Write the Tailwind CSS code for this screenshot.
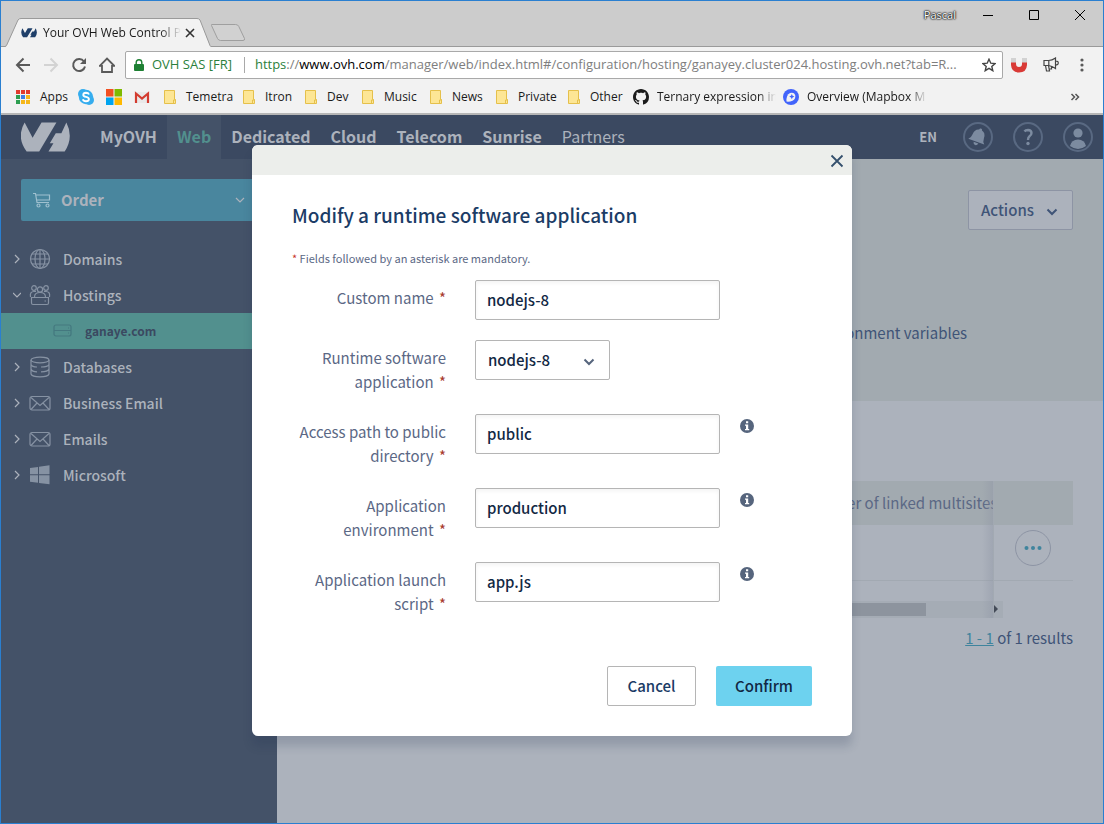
<!DOCTYPE html>
<html lang="en">
<head>
    <meta charset="UTF-8">
    <meta name="viewport" content="width=device-width, initial-scale=1.0">
    <title>Your OVH Web Control Panel</title>
    <script src="https://cdn.jsdelivr.net/npm/@tailwindcss/browser@4"></script>
</head>
<body class="min-h-screen flex flex-col border border-[#2a7fd0] bg-[#acb2bc] font-['Noto_Sans_CJK_SC','Noto_Sans',sans-serif] text-[15px] overflow-x-hidden">

    <!-- Browser window -->
    <div class="font-['Open_Sans','Noto_Sans',sans-serif] text-xs text-[#1a1a1a] bg-[#f2f2f2] border-b-2 border-[#b6b6b6]">
        <!-- Title bar -->
        <div class="h-[46px] flex items-end justify-between bg-[#cccccc] border-b border-[#9a9a9a]">
            <div class="flex items-end pl-1">
                <div class="relative w-[206px] h-[29px] -mb-px flex items-center pl-4 pr-4">
                    <svg class="absolute inset-0 w-full h-full" viewBox="0 0 206 29" fill="none">
                        <path d="M0 29 L1.500 28 L13 2 Q14 .5 16 .5 H192 Q194 .5 195 2 L205 28 L206 29 Z" fill="#f2f2f2"/>
                        <path d="M0 28.500 L1.500 27.500 L13 2 Q14 .5 16 .5 H192 Q194 .5 195 2 L205 27.500 L206 28.500" stroke="#9a9a9a"/>
                    </svg>
                    <svg class="relative w-4 h-4 shrink-0" viewBox="60 7 153 153" fill="#1f3f69">
                        <path d="M74 38 L98 84 L125 38 H170 L118 125 H80 Q48 82 74 38Z"/>
                        <path d="M200 38 Q226 82 195 125 H146 L161 100 H150 L168 70 H185Z"/>
                    </svg>
                    <span class="relative ml-1.5 flex-1 overflow-hidden whitespace-nowrap mask-r-from-85%">Your OVH Web Control Pa</span>
                    <button class="relative ml-1" aria-label="Close tab">
                        <svg class="w-2.5 h-2.5" viewBox="0 0 10 10" stroke="#333" stroke-width="1.600"><path d="M1 1 L9 9 M9 1 L1 9"/></svg>
                    </button>
                </div>
                <button class="mb-1" aria-label="New tab">
                    <svg class="w-9 h-[18px]" viewBox="0 0 36 18"><path d="M0 1 H24 Q26.500 1 27.300 3 L33 15 Q33.500 17 31.500 17 H9 Q7 17 6 15 L0 2 Q-.5 1 0 1Z" transform="translate(.5 -.5)" fill="#d1d1d1" stroke="#9f9f9f"/></svg>
                </button>
            </div>
            <div class="self-start flex items-center h-7">
                <span class="text-[11px] text-white text-shadow-[0_0_1px_#000,0_0_2px_#000,0_0_2px_#000]">Pascal</span>
                <button class="ml-6 w-4 flex justify-center" aria-label="Minimize"><svg class="w-3 h-3" viewBox="0 0 12 12" stroke="#000"><path d="M1 6.500 H11"/></svg></button>
                <button class="ml-7 w-5 flex justify-center" aria-label="Maximize"><svg class="w-3 h-3" viewBox="0 0 12 12" fill="none" stroke="#000"><path d="M1.500 1.500 H10.500 V10.500 H1.500Z"/></svg></button>
                <button class="ml-6.5 mr-[13px] w-5 flex justify-center" aria-label="Close"><svg class="w-3 h-3" viewBox="0 0 12 12" stroke="#000"><path d="M1 1 L11 11 M11 1 L1 11"/></svg></button>
            </div>
        </div>

        <!-- Toolbar -->
        <div class="h-9 flex items-center pl-3.5 pr-3.5">
            <button class="mr-3" aria-label="Back"><svg class="w-4 h-4" viewBox="0 0 16 16" fill="none" stroke="#5a5a5a" stroke-width="2"><path d="M15 8 H2 M8.500 1.500 L2 8 L8.500 14.500"/></svg></button>
            <button class="mr-3" aria-label="Forward"><svg class="w-4 h-4" viewBox="0 0 16 16" fill="none" stroke="#d3d3d3" stroke-width="2"><path d="M1 8 H14 M7.500 1.500 L14 8 L7.500 14.500"/></svg></button>
            <button class="mr-3" aria-label="Reload"><svg class="w-4 h-4" viewBox="0 0 16 16" fill="none" stroke="#5a5a5a" stroke-width="2"><path d="M13 4.500 A6 6 0 1 0 14 9.500"/><path d="M15 1 V7 H9Z" fill="#5a5a5a" stroke="none"/></svg></button>
            <button class="mr-2.5" aria-label="Home"><svg class="w-4 h-4" viewBox="0 0 16 16" fill="none" stroke="#5a5a5a" stroke-width="1.800"><path d="M.8 8.800 L8 1.500 L15.200 8.800 H13 V15 H3 V8.800Z"/></svg></button>
            <div class="flex-1 min-w-0 h-7 flex items-center bg-white border border-[#a9a9a9] rounded-xs pl-2 pr-1.5 text-[13px]">
                <svg class="w-2.5 h-3 shrink-0" viewBox="0 0 10 12" fill="#1e8033"><path d="M1 5 H9 Q10 5 10 6 V11 Q10 12 9 12 H1 Q0 12 0 11 V6 Q0 5 1 5Z"/><path d="M2.200 5.500 V3.500 A2.800 2.800 0 0 1 7.800 3.500 V5.500" fill="none" stroke="#1e8033" stroke-width="1.400"/></svg>
                <span class="ml-2 whitespace-nowrap text-[#2b7f3c]">OVH SAS [FR]</span>
                <span class="ml-3 mr-2.5 w-px h-4 shrink-0 bg-[#a9a9a9]"></span>
                <div role="textbox" aria-label="Address" class="flex-1 min-w-0 whitespace-nowrap overflow-hidden text-[#7e7e7e]"><span class="text-[#2b7f3c]">https</span>://<span class="text-black">www.ovh.com</span>/manager/web/index.html#/configuration/hosting/ganayey.cluster024.hosting.ovh.net?tab=R...</div>
                <svg class="w-3.5 h-3.5 shrink-0" viewBox="0 0 14 14" fill="none" stroke="#444" stroke-width="1.400"><path d="M7 1.200 L8.800 5.200 L13 5.600 L9.800 8.400 L10.800 12.700 L7 10.400 L3.200 12.700 L4.200 8.400 L1 5.600 L5.200 5.200Z"/></svg>
            </div>
            <button class="ml-2" aria-label="Magnet"><svg class="w-4 h-4" viewBox="0 0 16 16"><path d="M0 1 H5 V6 H0Z M11 1 H16 V6 H11Z" fill="#d2d2d2"/><path d="M0 5.500 H5 V7 Q5 10 8 10 Q11 10 11 7 V5.500 H16 V8 Q15.500 15.500 8 15.500 Q.5 15.500 0 8Z" fill="#d93a36"/></svg></button>
            <button class="ml-4" aria-label="Announcements"><svg class="w-4 h-4" viewBox="0 0 16 16" fill="none" stroke="#444" stroke-width="1.200"><path d="M1 3.500 H5.500 Q9 3.500 12.500 1 V11.500 Q9 9 5.500 8.500 H1Z M5.800 3.500 V8.500 M2.500 8.500 L3.500 14 H6.500 L5.500 8.500 M8.500 9.500 V12 H6.300 M12.500 4 Q15.500 4 15.200 6 Q15.300 8 12.500 8"/></svg></button>
            <button class="ml-[15px] -mr-px" aria-label="Menu"><svg class="w-4 h-4" viewBox="0 0 16 16" fill="#5a5a5a"><circle cx="8" cy="3" r="1.600"/><circle cx="8" cy="8" r="1.600"/><circle cx="8" cy="13" r="1.600"/></svg></button>
        </div>

        <!-- Bookmarks -->
        <svg class="hidden">
            <symbol id="folder" viewBox="0 0 12 14"><path d="M.5 .5 H10.500 V9.500 H11.500 V13.500 H.5Z" fill="#fde695" stroke="#e5c04b"/><path d="M9.500 13 V10 H11.500" fill="none" stroke="#e5c04b"/></symbol>
        </svg>
        <nav class="h-[30px] flex items-center pl-[15px] pr-5 pb-0.5 whitespace-nowrap">
            <a href="#" class="w-[62px] shrink-0 flex items-center gap-2.5">
                <svg class="w-3.5 h-3.5" viewBox="0 0 14 14"><path d="M0 0h4v4H0z M5 0h4v4H5z M10 0h4v4h-4z" fill="#e33b2e"/><path d="M0 5h4v4H0z" fill="#2d9e50"/><path d="M5 5h4v4H5z" fill="#3f7ee8"/><path d="M10 5h4v4h-4z M5 10h4v4H5z M10 10h4v4h-4z" fill="#f5b71b"/><path d="M0 10h4v4H0z" fill="#2d9e50"/></svg>
                Apps
            </a>
            <a href="#" class="w-7 shrink-0" aria-label="Skype"><svg class="w-4 h-4" viewBox="0 0 16 16"><circle cx="5" cy="5" r="5" fill="#36adee"/><circle cx="11" cy="11" r="5" fill="#36adee"/><circle cx="8" cy="8" r="7.200" fill="#36adee"/><path d="M11 5.500 Q10.300 3.800 8 3.800 Q5.300 3.900 5.300 5.900 Q5.300 7.300 8 7.900 Q10.900 8.500 10.900 10.200 Q10.800 12.200 8 12.200 Q5.400 12.200 4.900 10.200" fill="none" stroke="#fff" stroke-width="1.900"/></svg></a>
            <a href="#" class="w-7 shrink-0" aria-label="Microsoft"><svg class="w-4 h-4" viewBox="0 0 16 16"><path d="M0 0h7.500v7.500H0z" fill="#f25022"/><path d="M8.500 0H16v7.500H8.500z" fill="#7fba00"/><path d="M0 8.500h7.500V16H0z" fill="#00a4ef"/><path d="M8.500 8.500H16V16H8.500z" fill="#ffb900"/></svg></a>
            <a href="#" class="w-[30px] shrink-0" aria-label="Gmail"><svg class="w-4 h-4" viewBox="0 0 16 16"><path d="M2 3h12v11H2z" fill="#e9e9e9"/><path d="M2 14 V4.500 L8 9.500 L14 4.500 V14" fill="none" stroke="#d33c30" stroke-width="2.200"/></svg></a>
            <a href="#" class="w-[79px] shrink-0 flex items-center gap-2.5"><svg class="w-3 h-3.5 shrink-0"><use href="#folder"/></svg>Temetra</a>
            <a href="#" class="w-[62px] shrink-0 flex items-center gap-2.5"><svg class="w-3 h-3.5 shrink-0"><use href="#folder"/></svg>Itron</a>
            <a href="#" class="w-[57px] shrink-0 flex items-center gap-2.5"><svg class="w-3 h-3.5 shrink-0"><use href="#folder"/></svg>Dev</a>
            <a href="#" class="w-[68px] shrink-0 flex items-center gap-2.5"><svg class="w-3 h-3.5 shrink-0"><use href="#folder"/></svg>Music</a>
            <a href="#" class="w-[66px] shrink-0 flex items-center gap-2.5"><svg class="w-3 h-3.5 shrink-0"><use href="#folder"/></svg>News</a>
            <a href="#" class="w-[72px] shrink-0 flex items-center gap-2.5"><svg class="w-3 h-3.5 shrink-0"><use href="#folder"/></svg>Private</a>
            <a href="#" class="w-[65px] shrink-0 flex items-center gap-2.5"><svg class="w-3 h-3.5 shrink-0"><use href="#folder"/></svg>Other</a>
            <a href="#" class="w-[150px] shrink-0 flex items-center gap-2">
                <svg class="w-4 h-4 shrink-0" viewBox="0 0 16 16" fill="#1b1b1b"><path d="M8 0C3.580 0 0 3.580 0 8c0 3.540 2.290 6.530 5.470 7.590.4.070.55-.17.55-.38 0-.19-.01-.82-.01-1.490-2.010.37-2.530-.49-2.690-.94-.09-.23-.48-.94-.82-1.130-.28-.15-.68-.52-.01-.53.63-.01 1.080.58 1.230.82.72 1.210 1.870.87 2.330.66.07-.52.28-.87.51-1.070-1.780-.2-3.640-.89-3.640-3.950 0-.87.31-1.590.82-2.150-.08-.2-.36-1.020.08-2.120 0 0 .67-.21 2.200.82.64-.18 1.320-.27 2-.27s1.360.09 2 .27c1.530-1.040 2.200-.82 2.200-.82.44 1.100.16 1.920.08 2.120.51.56.82 1.270.82 2.150 0 3.070-1.870 3.750-3.650 3.950.29.25.54.73.54 1.480 0 1.070-.01 1.930-.01 2.200 0 .21.15.46.55.38A8.010 8.010 0 0 0 16 8c0-4.420-3.580-8-8-8z"/></svg>
                <span class="w-[119px] overflow-hidden mask-r-from-85%">Ternary expression in</span>
            </a>
            <a href="#" class="shrink-0 flex items-center gap-2">
                <svg class="w-4 h-4 shrink-0" viewBox="0 0 16 16"><circle cx="8" cy="8" r="8" fill="#4264fb"/><path d="M3.500 12.600 Q3 6 7 4 Q11 2.800 12.200 6 Q13 10 9.500 11.800 Q6.500 13 3.500 12.600Z" fill="#f2f2f2"/><path d="M8.800 5 L9.600 6.800 L11.400 7.600 L9.600 8.400 L8.800 10.200 L8 8.400 L6.200 7.600 L8 6.800Z" fill="#4264fb"/></svg>
                <span class="w-[120px] overflow-hidden mask-r-from-85%">Overview (Mapbox M</span>
            </a>
            <button class="ml-auto" aria-label="More bookmarks"><svg class="w-4 h-4" viewBox="0 0 16 16" fill="none" stroke="#555" stroke-width="1.500"><path d="M4.500 5 L7.500 8 L4.500 11 M8.500 5 L11.500 8 L8.500 11"/></svg></button>
        </nav>
    </div>

    <!-- Page -->
    <div class="relative flex-1 flex flex-col">
        <header class="h-11 flex items-center bg-[#3b4961] text-[#acb2bc] pl-5 pr-2.5 text-base">
            <a href="#" aria-label="OVH" class="mr-5">
                <svg class="w-[49px] h-[30px]" viewBox="63 37 148 89" fill="#acb2bc">
                    <path d="M74 38 L98 84 L125 38 H170 L118 125 H80 Q48 82 74 38Z"/>
                    <path d="M200 38 Q223 82 195 125 H146 L161 100 H150 L168 70 H185Z"/>
                </svg>
            </a>
            <nav class="self-stretch flex items-stretch font-bold">
                <a href="#" class="flex items-center px-2.5 pb-0.5">MyOVH</a>
                <a href="#" class="flex items-center px-2.5 pb-0.5 bg-[#445268] text-[#52908e]">Web</a>
                <a href="#" class="flex items-center px-2.5 pb-0.5">Dedicated</a>
                <a href="#" class="flex items-center px-2.5 pb-0.5">Cloud</a>
                <a href="#" class="flex items-center px-2.5 pb-0.5">Telecom</a>
                <a href="#" class="flex items-center px-2.5 pb-0.5">Sunrise</a>
                <a href="#" class="flex items-center px-2.5 pb-0.5 font-normal">Partners</a>
            </nav>
            <div class="ml-auto flex items-center gap-5">
                <button class="mr-1.5 text-[13px] font-bold">EN</button>
                <button aria-label="Notifications"><svg class="w-[30px] h-[30px]" viewBox="0 0 30 30"><circle cx="15" cy="15" r="14" fill="none" stroke="#596982" stroke-width="2"/><g fill="#7c8ba0" transform="rotate(20 15 15)"><path d="M15 6 Q16.500 6 16.500 7.500 Q20.800 8.500 21 14 Q21 18 23.500 20 H6.500 Q9 18 9 14 Q9.200 8.500 13.500 7.500 Q13.500 6 15 6Z"/><path d="M12.500 21 H17.500 Q17 23.500 15 23.500 Q13 23.500 12.500 21Z"/></g></svg></button>
                <button aria-label="Help"><svg class="w-[30px] h-[30px]" viewBox="0 0 30 30"><circle cx="15" cy="15" r="14" fill="none" stroke="#596982" stroke-width="2"/><path d="M11.500 9.500 Q12.500 8 15 8 Q18.500 8.200 18.500 11 Q18.500 13 16.500 14.300 Q15 15.400 15 18" fill="none" stroke="#7c8ba0" stroke-width="2.400"/><circle cx="15" cy="21.500" r="1.700" fill="#7c8ba0"/></svg></button>
                <button aria-label="Account"><svg class="w-[30px] h-[30px]" viewBox="0 0 30 30"><circle cx="15" cy="15" r="14" fill="none" stroke="#596982" stroke-width="2"/><circle cx="15" cy="11" r="4.600" fill="#7c8ba0"/><path d="M7 24 Q8.500 17.500 15 17.500 Q21.500 17.500 23 24 Q19 27 15 27 Q11 27 7 24Z" fill="#7c8ba0"/></svg></button>
            </div>
        </header>

        <div class="flex-1 flex">
            <!-- Sidebar -->
            <aside class="w-[276px] shrink-0 bg-[#445268] text-[#acb2bc] text-sm font-medium pt-5">
                <button class="ml-5 mb-5 w-[236px] h-[42px] flex items-center rounded-xs bg-[#49869e] pl-3 pr-3 text-[15px] font-bold">
                    <svg class="w-[18px] h-4" viewBox="0 0 18 16" fill="none" stroke="#9fc0cf" stroke-width="1.200"><path d="M0 1.500 H2.500 L4 10.500 H16 M3 3 H16.500 V8 H3.700"/><circle cx="5.500" cy="13.500" r="1.500"/><circle cx="14.500" cy="13.500" r="1.500"/></svg>
                    <span class="ml-2.5">Order</span>
                    <svg class="ml-auto w-2.5 h-1.5" viewBox="0 0 10 6" fill="none" stroke="#acb2bc" stroke-width="1.200"><path d="M1 1 L5 5 L9 1"/></svg>
                </button>
                <a href="#" class="h-9 flex items-center pl-3">
                    <svg class="w-2 h-2.5" viewBox="0 0 8 10" fill="none" stroke="#acb2bc" stroke-width="1.200"><path d="M2 1 L6 5 L2 9"/></svg>
                    <svg class="ml-2 w-[22px] h-[22px]" viewBox="0 0 22 22" fill="none" stroke="#8692a3" stroke-width="1.200"><circle cx="11" cy="11" r="9.500"/><ellipse cx="11" cy="11" rx="5" ry="9.500"/><path d="M11 1.500 V20.500 M1.500 11 H20.500 M3 6 H19 M3 16 H19"/></svg>
                    <span class="ml-3">Domains</span>
                </a>
                <a href="#" class="h-9 flex items-center pl-3">
                    <svg class="w-2 h-2" viewBox="0 0 8 8" fill="none" stroke="#acb2bc" stroke-width="1.200"><path d="M0 2 L4 6 L8 2"/></svg>
                    <svg class="ml-2 w-[22px] h-[22px]" viewBox="0 0 22 22" fill="none" stroke="#8692a3" stroke-width="1.200"><circle cx="5" cy="4" r="2.300"/><circle cx="17" cy="4" r="2.300"/><circle cx="11" cy="5.500" r="2.600"/><path d="M2.500 13.500 H19.500 V19 Q19.500 20.500 18 20.500 H4 Q2.500 20.500 2.500 19Z M5.500 13 Q5.500 8.500 11 8.500 Q16.500 8.500 16.500 13 M1.500 13 Q.5 7.500 5 7.500 H7 M20.500 13 Q21.500 7.500 17 7.500 H15 M15.500 17 H17"/></svg>
                    <span class="ml-3">Hostings</span>
                </a>
                <a href="#" class="h-9 flex items-center bg-[#52908e] text-[#3b4961] pl-[52px] text-xs font-bold">
                    <svg class="w-5 h-3.5" viewBox="0 0 20 14" fill="none" stroke="#44787f" stroke-width="1.200"><rect x="1" y="1" width="17" height="11" rx="2"/><path d="M1 6.500 H18 M15 4 H16 M15 9 H16"/></svg>
                    <span class="ml-3">ganaye.com</span>
                </a>
                <a href="#" class="h-9 flex items-center pl-3">
                    <svg class="w-2 h-2.5" viewBox="0 0 8 10" fill="none" stroke="#acb2bc" stroke-width="1.200"><path d="M2 1 L6 5 L2 9"/></svg>
                    <svg class="ml-2 w-[22px] h-[22px]" viewBox="0 0 22 22" fill="none" stroke="#8692a3" stroke-width="1.200"><ellipse cx="11" cy="4" rx="9" ry="2.800"/><path d="M2 4 V18 Q3 20.800 11 20.800 Q19 20.800 20 18 V4 M2 8.500 Q3 11 8 11 M12 11 Q19 11 20 8.500 M2 13 Q3 15.800 8 15.800 M12 15.800 Q19 15.800 20 13"/></svg>
                    <span class="ml-3">Databases</span>
                </a>
                <a href="#" class="h-9 flex items-center pl-3">
                    <svg class="w-2 h-2.5" viewBox="0 0 8 10" fill="none" stroke="#acb2bc" stroke-width="1.200"><path d="M2 1 L6 5 L2 9"/></svg>
                    <svg class="ml-2 w-[22px] h-[22px]" viewBox="0 0 22 22" fill="none" stroke="#8692a3" stroke-width="1.200"><rect x="1" y="4.500" width="20" height="13.500" rx="2"/><path d="M2 5.500 L11 13.500 L20 5.500 M2 17.500 L8 11 M20 17.500 L14 11"/></svg>
                    <span class="ml-3">Business Email</span>
                </a>
                <a href="#" class="h-9 flex items-center pl-3">
                    <svg class="w-2 h-2.5" viewBox="0 0 8 10" fill="none" stroke="#acb2bc" stroke-width="1.200"><path d="M2 1 L6 5 L2 9"/></svg>
                    <svg class="ml-2 w-[22px] h-[22px]" viewBox="0 0 22 22" fill="none" stroke="#8692a3" stroke-width="1.200"><rect x="1" y="4.500" width="20" height="13.500" rx="2"/><path d="M2 5.500 L11 13.500 L20 5.500 M2 17.500 L8 11 M20 17.500 L14 11"/></svg>
                    <span class="ml-3">Emails</span>
                </a>
                <a href="#" class="h-9 flex items-center pl-3">
                    <svg class="w-2 h-2.5" viewBox="0 0 8 10" fill="none" stroke="#acb2bc" stroke-width="1.200"><path d="M2 1 L6 5 L2 9"/></svg>
                    <svg class="ml-2 w-[22px] h-[22px]" viewBox="0 0 22 22" fill="#8692a3"><path d="M1 4 L9 3 V10.300 H1Z M10 2.800 L20.500 1.300 V10.300 H10Z M1 11.300 H9 V18.700 L1 17.700Z M10 11.300 H20.500 V20.300 L10 18.900Z"/></svg>
                    <span class="ml-3">Microsoft</span>
                </a>
            </aside>

            <!-- Content -->
            <main class="flex-1 min-w-0 text-[#3f5477]">
                <div class="h-[242px] bg-[#a2aab0] pt-[31px] pr-[30px] flex flex-col items-end">
                    <button class="h-10 w-[105px] flex items-center justify-between border border-[#8d94a4] rounded-xs bg-[#acb2bc] pl-3 pr-3.5 font-medium">
                        Actions
                        <svg class="w-3 h-2 mt-1" viewBox="0 0 12 8" fill="none" stroke="#3f5477" stroke-width="2"><path d="M1.500 1.500 L6 6 L10.500 1.500"/></svg>
                    </button>
                    <a href="#" class="mt-[91px] mr-[106px] leading-6">Environment variables</a>
                </div>

                <div class="pt-20 px-[30px]">
                    <div class="relative">
                        <table class="w-full table-fixed text-left">
                            <thead>
                                <tr class="h-11 bg-[#a2aab0]">
                                    <th></th>
                                    <th class="w-[190px] font-normal whitespace-nowrap overflow-hidden text-[#5b6885]">Number of linked multisites</th>
                                    <th class="w-[79px]"></th>
                                </tr>
                            </thead>
                            <tbody>
                                <tr class="h-[55px] border-b border-[#a2a9b2]">
                                    <td></td>
                                    <td></td>
                                    <td class="pl-[21px] pb-2">
                                        <button class="w-9 h-9 rounded-full border border-[#8d94a4] flex items-center justify-center" aria-label="More actions">
                                            <svg class="w-[18px] h-1" viewBox="0 0 18 4" fill="#3f849d"><circle cx="2.500" cy="2" r="2"/><circle cx="9" cy="2" r="2"/><circle cx="15.500" cy="2" r="2"/></svg>
                                        </button>
                                    </td>
                                </tr>
                            </tbody>
                        </table>
                        <div class="mt-5 mr-[70px] h-[17px] bg-[#a5acb5] flex items-center justify-end">
                            <div class="flex-1 mr-[68px] h-[13px] bg-[#8d949e]"></div>
                            <svg class="w-[9px] h-2" viewBox="0 0 9 8" fill="#444b58"><path d="M0 0 L4 4 L0 8Z"/></svg>
                        </div>
                        <div class="absolute right-[79px] top-0 bottom-0 w-3 border-r border-[#a2a9b2] bg-linear-to-r from-[#8d94a4]/0 to-[#8d94a4]/40"></div>
                    </div>
                    <p class="mt-2 text-right leading-6"><a href="#" class="underline text-[#3f849d]">1 - 1</a> of 1 results</p>
                </div>
            </main>
        </div>

        <!-- Modal -->
        <div class="absolute inset-x-0 top-0 pt-[30px] flex justify-center">
            <div role="dialog" aria-labelledby="modalTitle" class="w-[600px] bg-white rounded-md overflow-hidden shadow-[0_10px_10px_#1e2d4b2e]">
                <div class="h-[30px] bg-[#eceeeb] flex items-center justify-end pt-0.5 pr-[7px]">
                    <button aria-label="Close dialog"><svg class="w-4 h-4" viewBox="0 0 16 16" fill="none" stroke="#34506d" stroke-width="1.800"><path d="M2.500 2.500 L13.500 13.500 M13.500 2.500 L2.500 13.500"/></svg></button>
                </div>
                <form class="px-10 pt-[25px] pb-[30px] text-[#5b6885]">
                    <h1 id="modalTitle" class="text-[19px] leading-[30px] font-medium text-[#1b3c66]">Modify a runtime software application</h1>
                    <p class="mt-[18px] mb-3 text-[11px] leading-5"><span class="text-[#c8352b]">*</span> Fields followed by an asterisk are mandatory.</p>

                    <div class="flex flex-col gap-5">
                        <div class="flex items-start">
                            <label for="customName" class="w-[154px] pt-1.5 mr-[29px] text-right leading-6">Custom name <span class="ml-0.5 text-[#a83a2c]">*</span></label>
                            <input id="customName" type="text" value="nodejs-8" class="w-[245px] h-10 pl-[11px] pr-3 pb-0.5 border border-[#b5b5b5] rounded-xs inset-shadow-sm text-[#122844] font-medium">
                        </div>
                        <div class="flex items-start">
                            <label for="runtime" class="w-[154px] pt-1.5 mr-[29px] text-right leading-6">Runtime software application <span class="ml-0.5 text-[#a83a2c]">*</span></label>
                            <div class="relative">
                                <select id="runtime" class="appearance-none w-[135px] h-10 px-3 border border-[#b5b5b5] rounded-xs bg-white text-[#122844] font-medium">
                                    <option>nodejs-8</option>
                                </select>
                                <svg class="absolute right-[15px] top-[18px] w-3 h-2 pointer-events-none" viewBox="0 0 12 8" fill="none" stroke="#56657d" stroke-width="2"><path d="M1.500 1.500 L6 6 L10.500 1.500"/></svg>
                            </div>
                        </div>
                        <div class="flex items-start">
                            <label for="publicDir" class="w-[154px] pt-1.5 mr-[29px] text-right leading-6">Access path to public directory <span class="ml-0.5 text-[#a83a2c]">*</span></label>
                            <input id="publicDir" type="text" value="public" class="w-[245px] h-10 pl-[11px] pr-3 pb-0.5 border border-[#b5b5b5] rounded-xs inset-shadow-sm text-[#122844] font-medium">
                            <svg class="ml-5 mt-[5px] w-3.5 h-3.5" viewBox="0 0 14 14"><circle cx="7" cy="7" r="7" fill="#56657d"/><path d="M6 2.300 H8.200 V4.300 H6Z M5 5.500 H8.200 V10 H9.200 V11.300 H5 V10 H6 V6.700 H5Z" fill="#fff"/></svg>
                        </div>
                        <div class="flex items-start">
                            <label for="appEnv" class="w-[154px] pt-1.5 mr-[29px] text-right leading-6">Application environment <span class="ml-0.5 text-[#a83a2c]">*</span></label>
                            <input id="appEnv" type="text" value="production" class="w-[245px] h-10 pl-[11px] pr-3 pb-0.5 border border-[#b5b5b5] rounded-xs inset-shadow-sm text-[#122844] font-medium">
                            <svg class="ml-5 mt-[5px] w-3.5 h-3.5" viewBox="0 0 14 14"><circle cx="7" cy="7" r="7" fill="#56657d"/><path d="M6 2.300 H8.200 V4.300 H6Z M5 5.500 H8.200 V10 H9.200 V11.300 H5 V10 H6 V6.700 H5Z" fill="#fff"/></svg>
                        </div>
                        <div class="flex items-start">
                            <label for="launchScript" class="w-[154px] pt-1.5 mr-[29px] text-right leading-6">Application launch script <span class="ml-0.5 text-[#a83a2c]">*</span></label>
                            <input id="launchScript" type="text" value="app.js" class="w-[245px] h-10 pl-[11px] pr-3 pb-0.5 border border-[#b5b5b5] rounded-xs inset-shadow-sm text-[#122844] font-medium">
                            <svg class="ml-5 mt-[5px] w-3.5 h-3.5" viewBox="0 0 14 14"><circle cx="7" cy="7" r="7" fill="#56657d"/><path d="M6 2.300 H8.200 V4.300 H6Z M5 5.500 H8.200 V10 H9.200 V11.300 H5 V10 H6 V6.700 H5Z" fill="#fff"/></svg>
                        </div>
                    </div>

                    <div class="mt-[50px] flex justify-end gap-5 font-medium">
                        <button type="button" class="h-10 w-[89px] border border-[#b5b5b5] rounded-xs text-[#1b3c66]">Cancel</button>
                        <button type="submit" class="h-10 w-24 rounded-xs bg-[#6dd2ef] text-[#122844]">Confirm</button>
                    </div>
                </form>
            </div>
        </div>
    </div>
</body>
</html>
